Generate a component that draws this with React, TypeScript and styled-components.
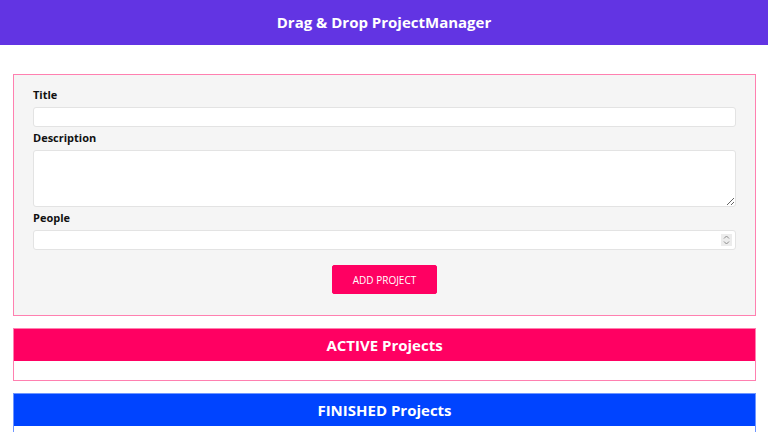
import React from "react";
import styled, { createGlobalStyle } from "styled-components";

const GlobalStyle = createGlobalStyle`
  html, body { margin: 0; padding: 0; background: #ffffff; }
  body { font-family: "Open Sans", "Liberation Sans", sans-serif; }
  * { box-sizing: border-box; }
`;

const Header = styled.header`
  height: 45px;
  background: #6234e3;
  display: flex;
  align-items: center;
  justify-content: center;
  padding-bottom: 2px;
`;

const HeaderTitle = styled.h1`
  margin: 0;
  color: #ffffff;
  font-size: 15px;
  font-weight: 700;
`;

const Main = styled.main`
  display: flex;
  flex-direction: column;
  gap: 12px;
  margin: 29px 12px 0 13px;
`;

const Form = styled.form`
  background: #f5f5f5;
  border: 1px solid #ff80b0;
  padding: 12px 19px 21px;
  display: flex;
  flex-direction: column;
`;

const Label = styled.label<{ $gap?: number }>`
  display: block;
  font-size: 11px;
  line-height: 16px;
  font-weight: 700;
  color: #111;
  margin-top: ${(p) => p.$gap ?? 0}px;
  margin-bottom: 4px;
`;

const TextInput = styled.input`
  display: block;
  width: 100%;
  height: 20px;
  border: 1px solid #e3e3e3;
  border-radius: 3px;
  background: #ffffff;
  font: inherit;
  font-size: 11px;
  padding: 0 4px;
  outline: none;
`;

const NumberWrap = styled.div`
  position: relative;
`;

const Spinner = styled.span`
  position: absolute;
  right: 4px;
  top: 4px;
  width: 11px;
  height: 12px;
  background: #ececec;
  display: flex;
  align-items: center;
  justify-content: center;
  pointer-events: none;
`;

const TextArea = styled.textarea`
  display: block;
  width: 100%;
  height: 57px;
  border: 1px solid #e3e3e3;
  border-radius: 3px;
  background: #ffffff;
  font: inherit;
  font-size: 11px;
  padding: 2px 4px;
  outline: none;
`;

const ButtonRow = styled.div`
  display: flex;
  justify-content: center;
  margin-top: 15px;
`;

const AddButton = styled.button`
  width: 105px;
  height: 29px;
  background: #ff0062;
  border: 1px solid #ff0062;
  border-radius: 2px;
  color: #ffffff;
  font-family: "Open Sans", sans-serif;
  font-size: 10px;
  font-weight: 400;
  cursor: pointer;
`;

const Section = styled.section<{ $border: string }>`
  border: 1px solid ${(p) => p.$border};
  background: #ffffff;
`;

const SectionHeader = styled.header<{ $bg: string }>`
  height: 32px;
  background: ${(p) => p.$bg};
  display: flex;
  align-items: center;
  justify-content: center;
`;

const SectionTitle = styled.h2`
  margin: 0;
  color: #ffffff;
  font-size: 15px;
  font-weight: 700;
`;

const SectionBody = styled.ul`
  list-style: none;
  margin: 0;
  padding: 0;
  height: 19px;
`;

export default function App() {
  return (
    <>
      <GlobalStyle />
      <Header>
        <HeaderTitle>Drag &amp; Drop ProjectManager</HeaderTitle>
      </Header>
      <Main>
        <Form onSubmit={(e) => e.preventDefault()}>
          <Label htmlFor="title">Title</Label>
          <TextInput id="title" type="text" />
          <Label htmlFor="description" $gap={3}>Description</Label>
          <TextArea id="description" rows={3} />
          <Label htmlFor="people" $gap={3}>People</Label>
          <NumberWrap>
            <TextInput id="people" type="number" />
            <Spinner>
              <svg width="7" height="10" viewBox="0 0 7 10" fill="none" stroke="#8a8a8a" strokeWidth="1">
                <path d="M1 3.5 L3.5 1 L6 3.5" />
                <path d="M1 6.5 L3.5 9 L6 6.5" />
              </svg>
            </Spinner>
          </NumberWrap>
          <ButtonRow>
            <AddButton type="submit">ADD PROJECT</AddButton>
          </ButtonRow>
        </Form>
        <Section $border="#ff80b0">
          <SectionHeader $bg="#ff0062">
            <SectionTitle>ACTIVE Projects</SectionTitle>
          </SectionHeader>
          <SectionBody />
        </Section>
        <Section $border="#6f96ff">
          <SectionHeader $bg="#0044ff">
            <SectionTitle>FINISHED Projects</SectionTitle>
          </SectionHeader>
          <SectionBody />
        </Section>
      </Main>
    </>
  );
}
